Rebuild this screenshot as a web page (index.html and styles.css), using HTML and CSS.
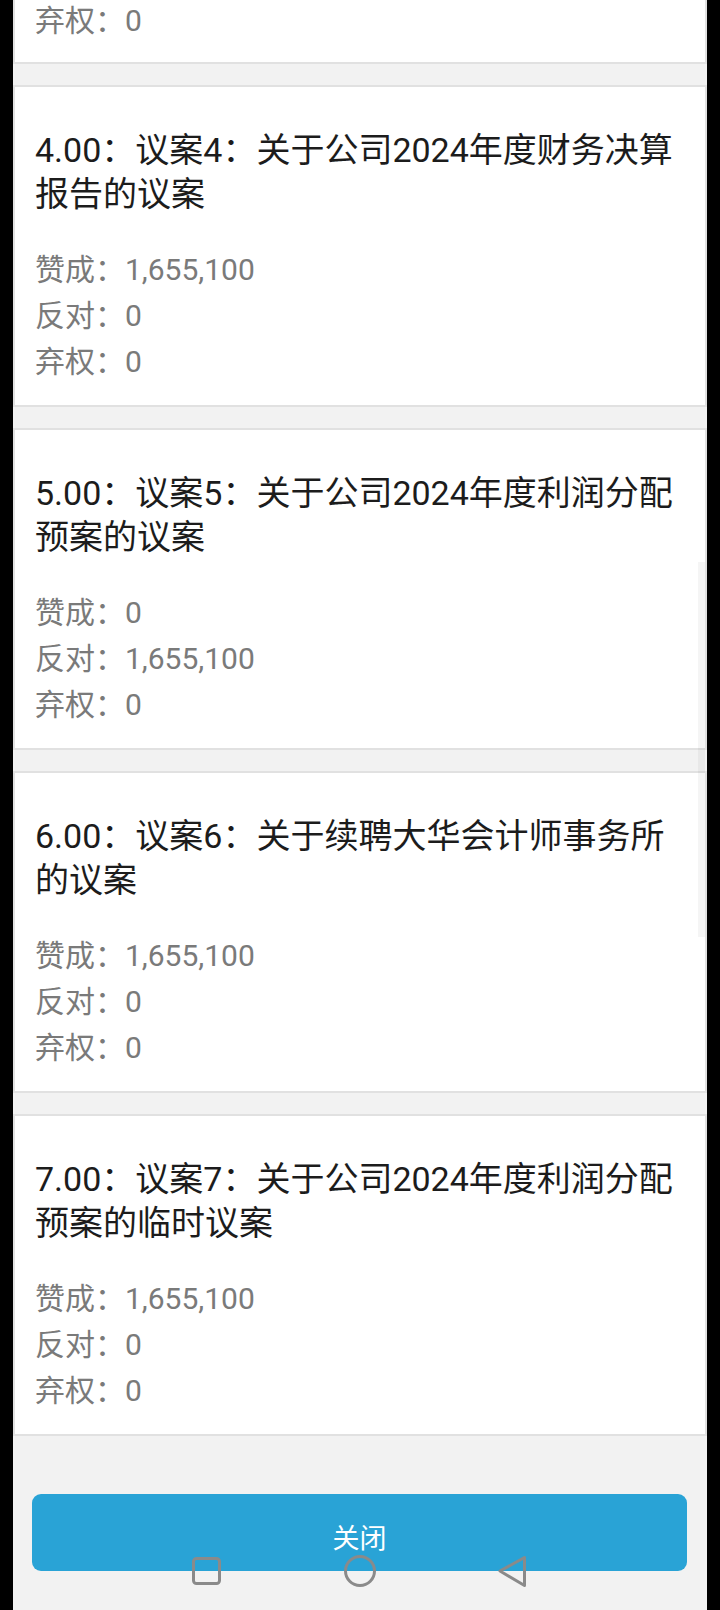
FILE: index.html
```html
<!DOCTYPE html>
<html>
<head>
	<meta charset="UTF-8">
	<meta name="viewport" content="width=device-width, initial-scale=1.0">
	<title>投票结果</title>
	<link rel="stylesheet" href="styles.css">
</head>
<body>
	<div class="screen">
		<div class="list">
			<section class="card card-cut">
				<ul class="stats">
					<li>弃权：0</li>
				</ul>
			</section>

			<section class="card">
				<h2 class="title">4.00：议案4：关于公司2024年度财务决算报告的议案</h2>
				<ul class="stats">
					<li>赞成：1,655,100</li>
					<li>反对：0</li>
					<li>弃权：0</li>
				</ul>
			</section>

			<section class="card">
				<h2 class="title">5.00：议案5：关于公司2024年度利润分配预案的议案</h2>
				<ul class="stats">
					<li>赞成：0</li>
					<li>反对：1,655,100</li>
					<li>弃权：0</li>
				</ul>
			</section>

			<section class="card">
				<h2 class="title">6.00：议案6：关于续聘大华会计师事务所的议案</h2>
				<ul class="stats">
					<li>赞成：1,655,100</li>
					<li>反对：0</li>
					<li>弃权：0</li>
				</ul>
			</section>

			<section class="card">
				<h2 class="title">7.00：议案7：关于公司2024年度利润分配预案的临时议案</h2>
				<ul class="stats">
					<li>赞成：1,655,100</li>
					<li>反对：0</li>
					<li>弃权：0</li>
				</ul>
			</section>
		</div>

		<footer class="footer">
			<button class="btn-close" type="button">关闭</button>
		</footer>

		<div class="scroll-thumb"></div>

		<!-- system navigation bar drawn over the page -->
		<svg class="navbar" width="694" height="60" viewBox="0 0 694 60" fill="none" stroke="#8a8a8a" stroke-width="3" stroke-linejoin="round">
			<rect x="180.5" y="13.5" width="26" height="25" rx="3"/>
			<circle cx="347" cy="26" r="14.5"/>
			<polygon points="487,26 511.5,12.5 511.5,40.5"/>
		</svg>
	</div>
</body>
</html>
```

FILE: styles.css
```css
html, body {
	margin: 0;
	padding: 0;
}

body {
	background-color: #000;
	font-family: Roboto, "Noto Sans CJK SC", sans-serif;
}

.screen {
	position: relative;
	margin: 0 13px;
	height: 1610px;
	overflow: hidden;
	background-color: #f2f2f2;
}

.list {
	display: flex;
	flex-direction: column;
	gap: 21px;
}

.card {
	background-color: #fff;
	border: 2px solid #e1e1e1;
	padding: 41px 21px 20px 20px;
}

.card-cut {
	border-top: none;
	margin-top: -2px;
	padding-top: 0;
	padding-bottom: 18px;
}

.title {
	margin: 0 0 31px;
	font-size: 34px;
	font-weight: normal;
	line-height: 44px;
	color: #1c1c1c;
}

.stats {
	list-style: none;
	margin: 0;
	padding: 0;
	font-size: 30px;
	line-height: 46px;
	color: #7a7a7a;
}

.footer {
	padding: 58px 20px 0 19px;
}

.btn-close {
	display: block;
	width: 100%;
	height: 77px;
	padding: 14px 0 0;
	border: none;
	border-radius: 9px;
	background-color: #29a3d6;
	color: #fff;
	font-family: Roboto, "Noto Sans CJK SC", sans-serif;
	font-size: 27px;
	line-height: 63px;
}

.scroll-thumb {
	position: absolute;
	top: 562px;
	right: 2px;
	width: 7px;
	height: 375px;
	background-color: rgba(0, 0, 0, 0.04);
}

.navbar {
	position: absolute;
	left: 0;
	top: 1545px;
}
```
